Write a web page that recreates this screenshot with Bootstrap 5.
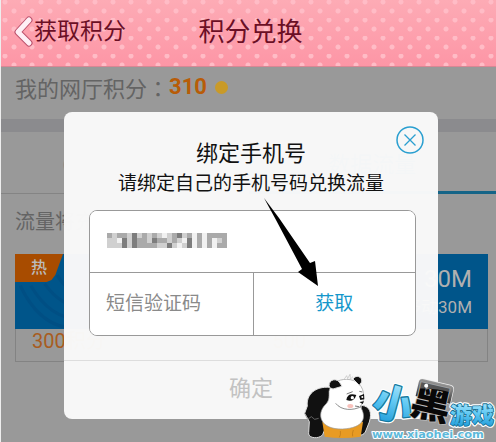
<!DOCTYPE html>
<html lang="zh-CN">
<head>
<meta charset="utf-8">
<meta name="viewport" content="width=device-width, initial-scale=1">
<title>积分兑换</title>
<link href="https://cdn.jsdelivr.net/npm/bootstrap@5.3.0/dist/css/bootstrap.min.css" rel="stylesheet">
<style>
body{font-family:"Noto Sans CJK SC",Roboto,sans-serif;background:#999;color:#646464;line-height:1;overflow:hidden}
.screen{min-height:100vh;border-left:1px solid #eee}
.topbar{height:67px;border-bottom:1px solid #d98794;padding-bottom:6px;
 background:radial-gradient(circle at 13px 11px,#ffbcc6 2px,transparent 3px) 0 0/18px 18px,
 radial-gradient(circle at 4px 2px,#ffbcc6 2px,transparent 3px) 0 0/18px 18px,
 linear-gradient(#fdabb5,#fd96a6)}
.back-link{color:#6b0f25;font-size:23px}
.page-title{color:#6b0f25;font-size:26px}
.side{flex:1 1 0}
.points{height:52px;font-size:22px;padding:0 14px 12px}
.points b{font-family:Roboto,sans-serif;color:#b85c08;font-size:22px}
.colon{font-family:"Noto Sans CJK TC",sans-serif}
.coin{width:13px;height:13px;border-radius:50%;background:#c99a28}
.band{height:13px;background:#8b8b8e}
.tab-line{height:62px;border-bottom:1px solid #848484}
.tab-line a{font-size:22px;color:#858585}
.tab-line a.chosen{color:#156487;border-bottom:3px solid #156487;margin-bottom:-1px}
.section-name{font-size:20px;padding:15px 14px 22px}
.offers{padding:0 8px 0 14px;margin-top:-1px}
.offer{border:1px solid #838383;height:108px}
.offer-head{height:75px;background:#00558a;color:#b0b0b0;font-family:Roboto,"Noto Sans CJK SC",sans-serif;margin:-1px}
.offer-head svg{inset:0}
.hot{width:48px;height:28px;background:#a84c00;color:#bbb;font-size:16px;font-weight:500;clip-path:polygon(0 0,100% 0,84% 75%,76% 93%,66% 100%,0 100%)}
.size-big{font-size:24px}.size-small{font-size:17px}
.price{font-family:Roboto,sans-serif;font-size:20px;color:#a85c20;padding:3px 16px}
.layer{inset:0;padding:112px 58px 23px 63px}
.dialog-box{background:rgba(249,249,249,.98);border-radius:8px;color:#111}
.close-x{right:14px;top:14px;width:28px;height:28px}
.dialog-title{font-size:22px;padding-top:28px}
.dialog-note{font-size:19px;padding-top:10px}
.fields{margin:19px 22px 0 25px;border:1px solid #999;border-radius:8px;background:#fff;overflow:hidden}
.fields input{font-size:19px;border:0;border-radius:0;padding:0 16px 6px;background:#fff}
.fields input::placeholder{color:#8a8a8a;opacity:1}
.phone{height:61px}.code-row{height:63px;border-top:1px solid #999}
.get-code{font-size:19px;color:#1597cb;border:0;border-left:1px solid #999;border-radius:0;padding:0 0 4px}
.mosaic{left:17px;top:22px}
.confirm{height:59px;margin-top:24px;border:0;border-top:1px solid #ddd;border-radius:0;font-size:22px;color:#c2c2c2;padding:0 0 8px}
.pointer{left:200px;top:86px}
.logo-mark{right:0;bottom:0}
</style>
<script src="https://cdn.jsdelivr.net/npm/bootstrap@5.3.0/dist/js/bootstrap.bundle.min.js"></script>
</head>
<body>
<div class="screen position-relative">
<header class="topbar d-flex align-items-center">
 <div class="side"><a href="#" class="back-link d-inline-flex align-items-center text-decoration-none ms-2 ps-1">
 <svg width="21" height="34" viewBox="0 0 21 34" fill="none" stroke-linecap="round" stroke-linejoin="round"><path d="M16 7 5 19l11 11" stroke="#bc526d" stroke-width="7"/><path d="M16 7 5 19l11 11" stroke="#fff0f6" stroke-width="5"/></svg>
 <span>获取积分</span></a></div>
 <h1 class="page-title m-0 ps-1 fw-normal">积分兑换</h1><div class="side"></div>
</header>
<main>
 <div class="points d-flex align-items-center"><span>我的网厅积分<span class="colon" lang="zh-TW">：</span></span><b>310</b><span class="coin ms-2"></span></div>
 <div class="band"></div>
 <nav class="tab-line d-flex">
  <a href="#" class="w-50 d-flex align-items-center justify-content-center text-decoration-none">QQ WiFi时长</a>
  <a href="#" class="chosen w-50 d-flex align-items-center justify-content-center text-decoration-none">数据流量</a>
 </nav>
 <h2 class="section-name m-0 fw-normal">流量将充入绑定手机</h2>
 <div class="offers d-flex gap-2">
  <div class="offer w-50">
   <div class="offer-head position-relative">
    <svg class="position-absolute w-100 h-100" viewBox="0 0 220 75" preserveAspectRatio="xMinYMin slice" fill="none" stroke="#004f84" stroke-width="3"><path d="M5 30Q25 72 60 70M15 30Q35 64 65 61M28 28Q45 52 68 50M40 20Q50 38 70 38"/></svg>
    <div class="hot position-relative d-flex align-items-center justify-content-center">热</div>
   </div><div class="price">300积分</div>
  </div>
  <div class="offer w-50">
   <div class="offer-head d-flex flex-column align-items-end justify-content-center gap-2 pe-3"><span class="size-big">30M</span><span class="size-small">移动30M</span></div>
   <div class="price">500</div>
  </div>
 </div>
</main>
<div class="layer position-absolute">
 <form class="dialog-box position-relative text-center" role="dialog" aria-labelledby="dlg">
  <button type="button" class="close-x btn p-0 border-0 position-absolute d-flex" aria-label="关闭"><svg width="28" height="28" fill="none" stroke="#2a9fd0"><circle cx="14" cy="14" r="13" stroke-width="1.5"/><path d="m8.500 8.500 11 11m0-11-11 11" stroke-width="1.300"/></svg></button>
  <h2 id="dlg" class="dialog-title m-0 fw-normal lh-1">绑定手机号</h2>
  <p class="dialog-note m-0">请绑定自己的手机号码兑换流量</p>
  <div class="fields">
   <div class="position-relative"><input class="phone form-control" type="tel" aria-label="手机号">
    <svg class="mosaic position-absolute" width="120" height="15" shape-rendering="crispEdges" aria-hidden="true"><path fill="#d0d0d0" d="M0 0h120v15H0z"/><path fill="#aaa" d="M0 0h5v5H0zM10 0h10v5H10zM15 5h5v10h-5zM35 0h5v5h-5zM30 5h10v10H30zM45 0h5v5h-5zM40 10h10v5H40zM50 5h10v5H50zM65 0h5v10h-5zM80 0h5v5h-5zM90 0h5v15h-5zM100 0h20v5h-20zM100 5h5v10h-5zM115 5h5v10h-5zM110 10h5v5h-5z"/><path fill="#7d7d7d" d="M25 0h5v15h-5zM15 5h5v10h-5zM45 5h5v5h-5zM60 10h5v5h-5zM70 0h5v5h-5zM80 5h5v10h-5z"/><path fill="#f1f1f1" d="M10 5h5v5h-5zM55 0h5v5h-5zM75 5h5v5h-5zM70 10h5v5h-5zM85 0h5v15h-5zM95 0h5v15h-5zM105 5h5v10h-5z"/></svg>
   </div>
   <div class="code-row d-flex"><input class="form-control h-100 w-50" type="text" placeholder="短信验证码" aria-label="短信验证码"><button type="button" class="get-code btn w-50">获取</button></div>
  </div>
  <button type="submit" class="confirm btn w-100">确定</button>
  <svg class="pointer position-absolute" width="56" height="90"><path d="m0 0 15 20 31 45 5-2 3 25-20-14 4-3L12 22Z" fill="#000"/></svg>
 </form>
</div>
<svg class="logo-mark position-absolute" width="206" height="80" viewBox="0 0 618 240" role="img" aria-label="小黑游戏">
 <defs><linearGradient id="blue" x2="0" y2="1"><stop stop-color="#c9f1ff"/><stop offset=".5" stop-color="#62c9f3"/><stop offset="1" stop-color="#1595d5"/></linearGradient>
 <linearGradient id="ink" x2="0" y2="1"><stop stop-color="#999"/><stop offset="1" stop-color="#333"/></linearGradient></defs>
 <g stroke="#ddd" stroke-width="3" fill="#111">
  <path d="M120 76C75 72 48 99 52 132l-8 22 14 25-2 33c-3 20 40 20 44 1l38-88zM215 130c24 3 32 21 23 50l-12 30c-8 14-29 12-32-4z"/>
  <path d="M97 180h122l-7 44q-55 8-108 0z" fill="#e89b24" stroke="none"/>
  <path d="M117 88c5-24 28-36 52-36 34 0 52 22 52 50 0 15-3 25-11 30 22 35 12 66-53 69-65 2-79-43-52-72 13-12 12-21 12-41z" fill="#fff" stroke="#999" stroke-width="2"/>
  <path d="M119 77c-8-18 14-33 29-17l8 13-27 8zM189 51c8-14 29-8 26 9l-7 10z"/>
 </g>
 <path d="m44 154 9 18 11-8 10 8 12-3" fill="none" stroke="#888" stroke-width="2"/>
 <path d="m163 51 7-10 3 9 7-13 1 14 8-7" fill="#fff" stroke="#bbb" stroke-width="2"/>
 <path d="M137 124c17 22 52 23 78 9" fill="none" stroke="#555" stroke-width="2"/>
 <path d="M169 114q3-23 30-15-8 24-30 15m38-12 15-6 1 16-12 2zM208 120l14-2-4 8z" fill="#111"/>
 <circle cx="187" cy="107" r="5" fill="#fff"/><circle cx="217" cy="105" r="3" fill="#fff"/><ellipse cx="181" cy="132" rx="9" ry="6" fill="#f8c1bb"/>
 <path d="m170 96 18-7m20-1 9 2M195 132l12 2" stroke="#333" stroke-width="2"/><path d="M151 207q2 12-3 19m42-22q-4 10-2 19" stroke="#b87616" stroke-width="2" fill="none"/>
 <g font-family="Noto Sans CJK SC,sans-serif" font-weight="900" stroke-linejoin="round" paint-order="stroke">
  <g transform="rotate(15 310 125)"><text x="251" y="170" font-size="118" fill="url(#blue)" stroke="#fff" stroke-width="15">小</text><text x="251" y="170" font-size="118" fill="url(#blue)" stroke="#16799e" stroke-width="8">小</text></g>
  <g transform="rotate(13 425 120)"><path d="M386 59h82q12 0 12 12v42H374V71q0-12 12-12Z" fill="url(#ink)" stroke="#eee" stroke-width="4"/><text x="365" y="168" font-size="120" fill="#080808" stroke="#bbb" stroke-width="5">黑</text><path d="M388 63h78q9 0 9 9v7q-48-3-96 10V72q0-9 9-9Z" fill="#888" opacity=".6"/><circle cx="398" cy="76" r="6" fill="#fff"/></g>
  <text x="480" y="184" font-size="66" fill="url(#blue)" stroke="#fff" stroke-width="12">游戏</text><text x="480" y="184" font-size="66" fill="url(#blue)" stroke="#176f91" stroke-width="5">游戏</text>
 </g>
 <text x="246" y="228" font-family="DejaVu Sans,sans-serif" font-weight="700" font-size="34" fill="#5db9da" stroke="#fff" stroke-width="6" stroke-linejoin="round" paint-order="stroke">www.xiaohei.com</text>
</svg>
</div>
</body>
</html>
